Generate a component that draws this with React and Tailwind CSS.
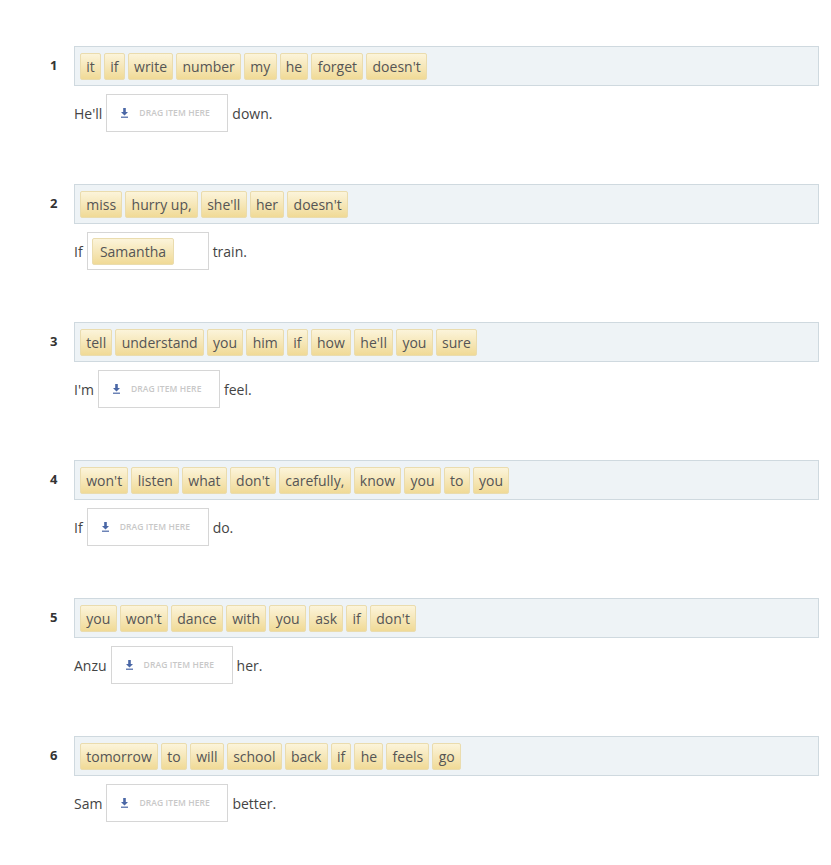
const questions = [
  {
    words: ["it", "if", "write", "number", "my", "he", "forget", "doesn't"],
    before: "He'll",
    after: "down.",
  },
  {
    words: ["miss", "hurry up,", "she'll", "her", "doesn't"],
    before: "If",
    after: "train.",
    filled: "Samantha",
  },
  {
    words: ["tell", "understand", "you", "him", "if", "how", "he'll", "you", "sure"],
    before: "I'm",
    after: "feel.",
  },
  {
    words: ["won't", "listen", "what", "don't", "carefully,", "know", "you", "to", "you"],
    before: "If",
    after: "do.",
  },
  {
    words: ["you", "won't", "dance", "with", "you", "ask", "if", "don't"],
    before: "Anzu",
    after: "her.",
  },
  {
    words: ["tomorrow", "to", "will", "school", "back", "if", "he", "feels", "go"],
    before: "Sam",
    after: "better.",
  },
];

function Chip({ children }) {
  return (
    <span className="inline-flex h-[27px] items-center rounded-[2px] border border-[#eadcae] bg-gradient-to-b from-[#fcf4da] to-[#f0da96] px-[5.25px] text-[14px] text-[#555]">
      {children}
    </span>
  );
}

function DropBox({ filled }) {
  return (
    <div className="mx-[4px] flex h-[38px] w-[122px] items-center border border-[#d6d6d6] bg-white px-[4px]">
      {filled ? (
        <Chip>
          <span className="px-[2px]">{filled}</span>
        </Chip>
      ) : (
        <div className="flex items-center pl-[9px]">
          <svg width="9" height="10" viewBox="0 0 9 10" className="mr-[10px]">
            <path d="M3.2 0h2.6v4h2.2L4.5 7.6 1 4h2.2z" fill="#4a67a6" />
            <rect x="1" y="8.6" width="7" height="1.2" fill="#4a67a6" />
          </svg>
          <span className="text-[8.5px] font-semibold tracking-[0.1px] text-[#c8c8c8]">DRAG ITEM HERE</span>
        </div>
      )}
    </div>
  );
}

export default function App() {
  return (
    <div
      className="min-h-screen bg-white pl-[50px] pr-[12px] pt-[46px] text-[#444]"
      style={{ fontFamily: '"Open Sans", "Liberation Sans", sans-serif' }}
    >
      {questions.map((q, i) => (
        <div key={i} className="mb-[52px] flex">
          <div className="w-[24px] pt-[10px] text-[13px] font-bold text-[#333]">{i + 1}</div>
          <div className="flex-1">
            <div className="flex h-[40px] items-center gap-[3px] border border-[#cfd9df] bg-[#eef3f6] px-[5px]">
              {q.words.map((w, j) => (
                <Chip key={j}>{w}</Chip>
              ))}
            </div>
            <div className="mt-[8px] flex items-center text-[14px] text-[#444]">
              <span>{q.before}</span>
              <DropBox filled={q.filled} />
              <span>{q.after}</span>
            </div>
          </div>
        </div>
      ))}
    </div>
  );
}
